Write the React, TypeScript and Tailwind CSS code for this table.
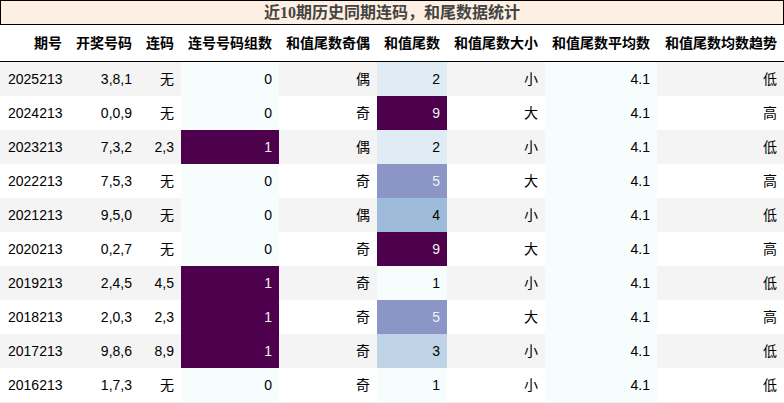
const cols = [
  { label: "期号", w: "w-[69px]" },
  { label: "开奖号码", w: "w-[70px]" },
  { label: "连码", w: "w-[42px]" },
  { label: "连号号码组数", w: "w-[98px]" },
  { label: "和值尾数奇偶", w: "w-[98px]" },
  { label: "和值尾数", w: "w-[70px]" },
  { label: "和值尾数大小", w: "w-[98px]" },
  { label: "和值尾数平均数", w: "w-[112px]" },
  { label: "和值尾数均数趋势", w: "w-[127px]" },
]

const rows = [
  ["2025213", "3,8,1", "无", 0, "偶", 2, "小", "4.1", "低"],
  ["2024213", "0,0,9", "无", 0, "奇", 9, "大", "4.1", "高"],
  ["2023213", "7,3,2", "2,3", 1, "偶", 2, "小", "4.1", "低"],
  ["2022213", "7,5,3", "无", 0, "奇", 5, "大", "4.1", "高"],
  ["2021213", "9,5,0", "无", 0, "偶", 4, "小", "4.1", "低"],
  ["2020213", "0,2,7", "无", 0, "奇", 9, "大", "4.1", "高"],
  ["2019213", "2,4,5", "4,5", 1, "奇", 1, "小", "4.1", "低"],
  ["2018213", "2,0,3", "2,3", 1, "奇", 5, "大", "4.1", "高"],
  ["2017213", "9,8,6", "8,9", 1, "奇", 3, "小", "4.1", "低"],
  ["2016213", "1,7,3", "无", 0, "奇", 1, "小", "4.1", "低"],
] as const

// BuPu steps as pandas background_gradient renders them
const groupCls: Record<number, string> = {
  0: "bg-[#f7fcfd] text-black",
  1: "bg-[#4d004b] text-[#f1f1f1]",
}
const tailCls: Record<number, string> = {
  1: "bg-[#f7fcfd] text-black",
  2: "bg-[#e0ecf4] text-black",
  3: "bg-[#bfd3e6] text-black",
  4: "bg-[#9ebcda] text-black",
  5: "bg-[#8c96c6] text-[#f1f1f1]",
  9: "bg-[#4d004b] text-[#f1f1f1]",
}

const font = "font-['Liberation_Sans','Noto_Sans_CJK_SC',sans-serif]"

export default function App() {
  return (
    <div className={`w-[784px] h-[403px] bg-white ${font} text-[14px] text-black`}>
      <div className="h-[25px] border border-black bg-[#fdf0e2] flex items-center justify-center">
        <span className="font-bold text-[16px] text-[#444] font-['Liberation_Serif','Noto_Sans_CJK_SC',serif] leading-none">
          近10期历史同期连码，和尾数据统计
        </span>
      </div>
      <div className="flex h-[37px] border-b border-black">
        {cols.map((c) => (
          <div key={c.label} className={`${c.w} flex items-center justify-end pr-[7px] font-bold`}>
            {c.label}
          </div>
        ))}
      </div>
      {rows.map((r, i) => {
        const stripe = i % 2 === 0 ? "bg-[#f4f4f4]" : "bg-white"
        return (
          <div key={r[0]} className={`flex h-[34px] ${stripe}`}>
            {r.map((v, j) => {
              let cls = ""
              if (j === 3) cls = groupCls[v as number]
              else if (j === 5) cls = tailCls[v as number]
              else if (j === 7) cls = "bg-[#f7fcfd]"
              const align = j === 0 ? "justify-start pl-[8px]" : "justify-end pr-[7px]"
              return (
                <div key={j} className={`${cols[j].w} flex items-center ${align} ${cls}`}>
                  {v}
                </div>
              )
            })}
          </div>
        )
      })}
      <div className="h-px bg-[#eeeeee]" />
    </div>
  )
}
